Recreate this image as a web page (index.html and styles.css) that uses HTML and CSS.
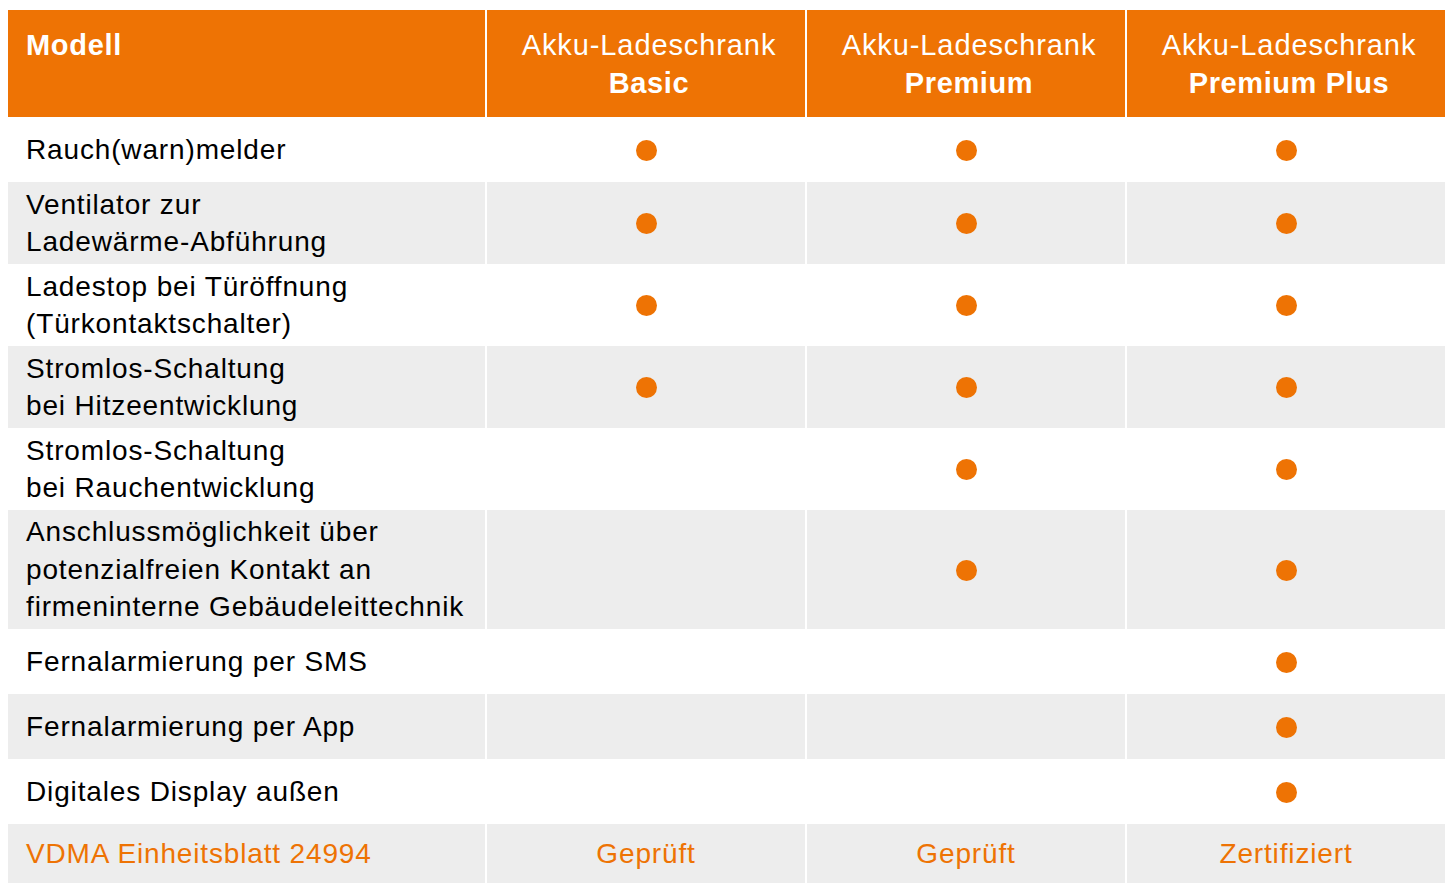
FILE: index.html
```html
<!DOCTYPE html>
<html lang="de">
<head>
<meta charset="utf-8">
<title>Akku-Ladeschrank Vergleich</title>
<link rel="stylesheet" href="styles.css">
</head>
<body>
<table class="cmp">
  <colgroup>
    <col class="c-label">
    <col class="c-model">
    <col class="c-model">
    <col class="c-model">
  </colgroup>
  <thead>
    <tr>
      <th class="h-label">Modell</th>
      <th class="h-model">Akku-Ladeschrank<br><b>Basic</b></th>
      <th class="h-model">Akku-Ladeschrank<br><b>Premium</b></th>
      <th class="h-model">Akku-Ladeschrank<br><b>Premium Plus</b></th>
    </tr>
  </thead>
  <tbody>
    <tr class="r1 white">
      <td>Rauch(warn)melder</td>
      <td><span class="dot"></span></td>
      <td><span class="dot"></span></td>
      <td><span class="dot"></span></td>
    </tr>
    <tr class="r2 grey">
      <td>Ventilator zur<br>Ladewärme-Abführung</td>
      <td><span class="dot"></span></td>
      <td><span class="dot"></span></td>
      <td><span class="dot"></span></td>
    </tr>
    <tr class="r2 white">
      <td>Ladestop bei Türöffnung<br>(Türkontaktschalter)</td>
      <td><span class="dot"></span></td>
      <td><span class="dot"></span></td>
      <td><span class="dot"></span></td>
    </tr>
    <tr class="r2 grey">
      <td>Stromlos-Schaltung<br>bei Hitzeentwicklung</td>
      <td><span class="dot"></span></td>
      <td><span class="dot"></span></td>
      <td><span class="dot"></span></td>
    </tr>
    <tr class="r2 white">
      <td>Stromlos-Schaltung<br>bei Rauchentwicklung</td>
      <td></td>
      <td><span class="dot"></span></td>
      <td><span class="dot"></span></td>
    </tr>
    <tr class="r3 grey">
      <td>Anschlussmöglichkeit über<br>potenzialfreien Kontakt an<br>firmeninterne Gebäudeleittechnik</td>
      <td></td>
      <td><span class="dot"></span></td>
      <td><span class="dot"></span></td>
    </tr>
    <tr class="r1 white">
      <td>Fernalarmierung per SMS</td>
      <td></td>
      <td></td>
      <td><span class="dot"></span></td>
    </tr>
    <tr class="r1 grey">
      <td>Fernalarmierung per App</td>
      <td></td>
      <td></td>
      <td><span class="dot"></span></td>
    </tr>
    <tr class="r1 white">
      <td>Digitales Display außen</td>
      <td></td>
      <td></td>
      <td><span class="dot"></span></td>
    </tr>
    <tr class="rlast grey accent">
      <td>VDMA Einheitsblatt 24994</td>
      <td>Geprüft</td>
      <td>Geprüft</td>
      <td>Zertifiziert</td>
    </tr>
  </tbody>
</table>
</body>
</html>
```
FILE: styles.css
```css
html, body {
  background: #ffffff;
}
body {
  margin: 10px 8px;
  font-family: "Liberation Sans", Arial, Helvetica, sans-serif;
  color: #000000;
}
.cmp {
  border-collapse: separate;
  border-spacing: 0;
  table-layout: fixed;
  width: 1437px;
}
.c-label { width: 477px; }
.c-model { width: 320px; }

.cmp th,
.cmp td {
  padding: 3px 18px;
  font-size: 28px;
  line-height: 37.5px;
  letter-spacing: 0.85px;
}
.cmp th + th,
.cmp td + td {
  border-left: 2px solid #ffffff;
  text-align: center;
  padding-left: 8px;
  padding-right: 8px;
}

.cmp thead th {
  background: #ee7304;
  color: #ffffff;
  height: 107px;
  box-sizing: border-box;
  padding-top: 16px;
  padding-bottom: 14px;
  vertical-align: top;
  font-weight: normal;
  font-size: 29px;
  line-height: 38px;
  letter-spacing: 0.9px;
}
.cmp thead th + th {
  padding-left: 14px;
  padding-right: 8px;
}
.cmp thead .h-label {
  text-align: left;
  font-weight: bold;
  letter-spacing: 0.7px;
}
.cmp thead b {
  font-weight: bold;
  letter-spacing: 0.6px;
}

.cmp td { vertical-align: middle; }
.white td { background: #ffffff; }
.grey td { background: #ededed; }

.r1 td { height: 65px; box-sizing: border-box; }
.r2 td { height: 82px; box-sizing: border-box; }
.r3 td { height: 119px; box-sizing: border-box; }
.rlast td { height: 59px; box-sizing: border-box; }

.accent td { color: #ee7304; }

.dot {
  display: inline-block;
  width: 21px;
  height: 21px;
  border-radius: 50%;
  background: #ee7304;
  vertical-align: middle;
  position: relative;
  top: -1px;
}
```
